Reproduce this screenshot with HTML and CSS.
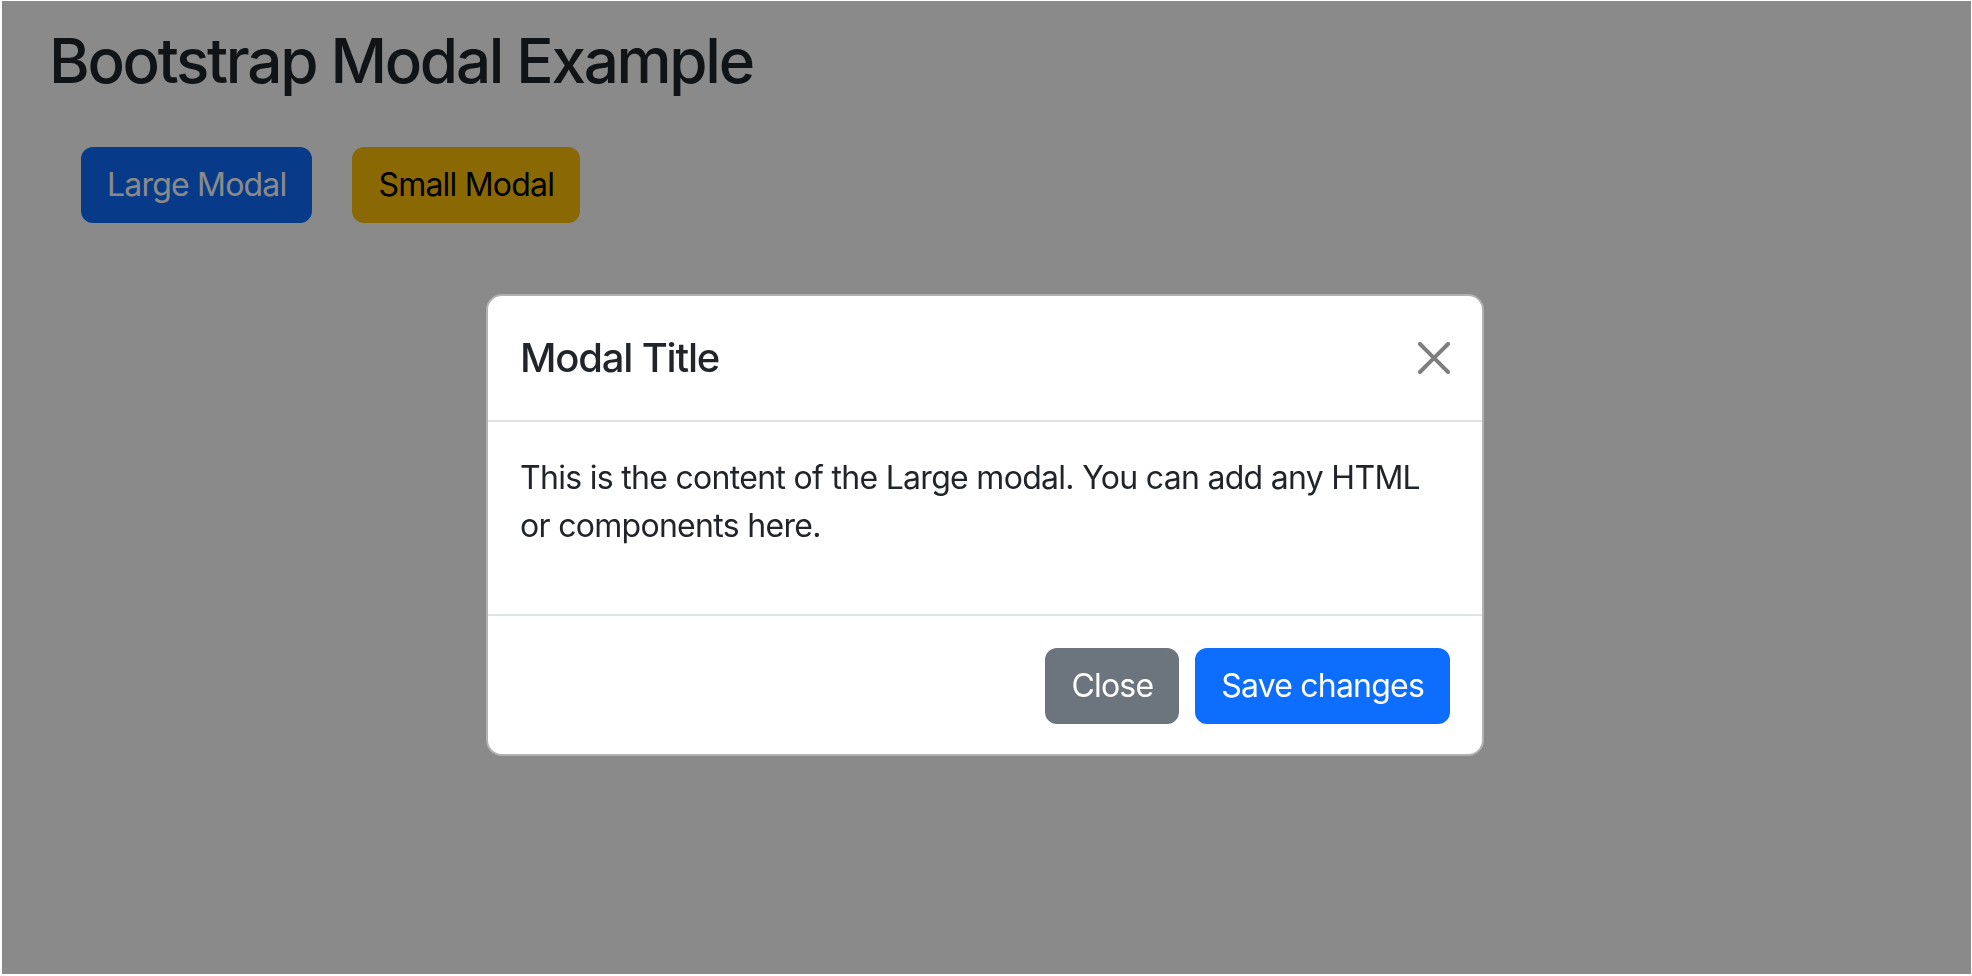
FILE: index.html
```html
<!DOCTYPE html>
<html lang="en">
<head>
<meta charset="utf-8">
<title>Bootstrap Modal Example</title>
<link rel="stylesheet" href="styles.css">
</head>
<body>
<div class="page">
  <h2 class="page-title">Bootstrap Modal Example</h2>
  <div class="actions">
    <button class="btn btn-primary" type="button">Large Modal</button>
    <button class="btn btn-warning" type="button">Small Modal</button>
  </div>
</div>

<div class="backdrop"></div>

<div class="modal-layer">
  <div class="modal">
    <div class="modal-header">
      <h5 class="modal-title">Modal Title</h5>
      <button class="btn-close" type="button" aria-label="Close">
        <svg viewBox="0 0 16 16" width="32" height="32" aria-hidden="true"><path d="M.293.293a1 1 0 0 1 1.414 0L8 6.586 14.293.293a1 1 0 1 1 1.414 1.414L9.414 8l6.293 6.293a1 1 0 0 1-1.414 1.414L8 9.414l-6.293 6.293a1 1 0 0 1-1.414-1.414L6.586 8 .293 1.707a1 1 0 0 1 0-1.414z"/></svg>
      </button>
    </div>
    <div class="modal-body">
      <p>This is the content of the Large modal. You can add any HTML or components here.</p>
    </div>
    <div class="modal-footer">
      <button class="btn btn-secondary" type="button">Close</button>
      <button class="btn btn-primary" type="button">Save changes</button>
    </div>
  </div>
</div>
</body>
</html>
```

FILE: styles.css
```css
* {
  box-sizing: border-box;
}

html, body {
  margin: 0;
  height: 100%;
}

body {
  background: #ffffff;
  color: #212529;
  font-family: Inter, "Noto Sans", "Liberation Sans", sans-serif;
  font-size: 32px;
  line-height: 1.5;
}

.page {
  padding: 24px 0 0 49px;
}

.page-title {
  margin: 0 0 49px;
  font-size: 62px;
  font-weight: 500;
  line-height: 1.2;
  letter-spacing: -2.3px;
  color: #212529;
}

.actions {
  display: flex;
  gap: 40px;
  padding-left: 32px;
}

.btn {
  font-family: inherit;
  font-size: 32px;
  line-height: 48px;
  padding: 12px 24px;
  border: 2px solid transparent;
  border-radius: 12px;
  letter-spacing: -0.8px;
  cursor: pointer;
}

.btn-primary {
  background: #0d6efd;
  border-color: #0d6efd;
  color: #ffffff;
}

.btn-warning {
  background: #ffc107;
  border-color: #ffc107;
  color: #000000;
}

.btn-secondary {
  background: #6c757d;
  border-color: #6c757d;
  color: #ffffff;
}

.backdrop {
  position: fixed;
  top: 1px;
  left: 2px;
  right: 1px;
  bottom: 2px;
  background: rgba(0, 0, 0, 0.46);
}

.modal-layer {
  position: fixed;
  inset: 0;
  display: flex;
  justify-content: center;
  align-items: flex-start;
  padding: 294px 0 0 0;
}

.modal {
  width: 998px;
  margin-left: -2px;
  background: #ffffff;
  border: 2px solid rgba(0, 0, 0, 0.3);
  border-radius: 16px;
}

.modal-header {
  display: flex;
  align-items: center;
  justify-content: space-between;
  padding: 32px;
  border-bottom: 2px solid #dee2e6;
}

.modal-title {
  margin: 0;
  font-size: 40px;
  font-weight: 500;
  line-height: 1.5;
  letter-spacing: -1.2px;
}

.btn-close {
  display: flex;
  padding: 0;
  margin: 0;
  background: none;
  border: 0;
  cursor: pointer;
}

.btn-close svg {
  fill: #000000;
  opacity: 0.5;
}

.modal-body {
  padding: 32px;
}

.modal-body p {
  margin: 0 0 32px;
  letter-spacing: -0.7px;
}

.modal-footer {
  display: flex;
  justify-content: flex-end;
  gap: 16px;
  padding: 32px 32px 30px;
  border-top: 2px solid #dee2e6;
}
```
